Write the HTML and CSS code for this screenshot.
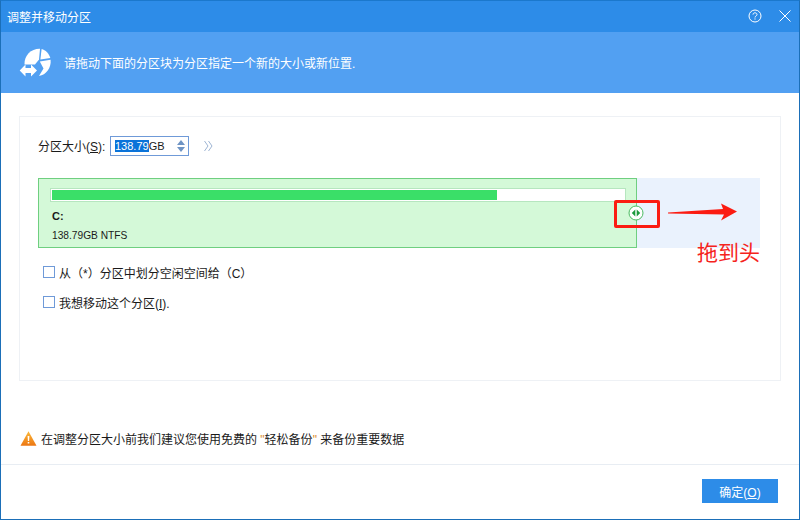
FILE: index.html
```html
<!DOCTYPE html>
<html lang="zh-CN">
  <head>
    <meta charset="UTF-8" />
    <title>调整并移动分区</title>
    <link rel="stylesheet" href="styles.css">
  </head>
  <body>
    <div class="window">
      <div class="title-bar">
        <span class="title-text">调整并移动分区</span>
        <div class="title-btns">
          <svg width="14" height="14" viewBox="0 0 14 14" fill="none" stroke="#fff">
            <circle cx="7" cy="7" r="6" />
            <path d="M5 5.6C5 4.4 5.9 3.8 7 3.8s2 .7 2 1.7c0 1.500-2 1.500-2 3" />
            <path d="M7 9.400v1.200" />
          </svg>
          <svg width="12" height="12" viewBox="0 0 12 12" fill="none" stroke="#fff">
            <path d="M.5.5l11 11M11.500.5l-11 11" />
          </svg>
        </div>
      </div>

      <div class="banner">
        <svg class="banner-icon" width="40" height="40" viewBox="0 0 40 40" fill="#fff">
          <path d="M25 5.800C16.500 5.500 9.200 12 9.500 21.500H20L24 16.500z" />
          <path d="M26.600 5.900C30.500 6.800 34.200 10.500 35.300 15L25.400 16.500z" />
          <path d="M35.600 16.800C36.500 25 31 32 24 33L28.500 25.500 24.800 18.500z" />
          <path d="M4.700 27.500L10.500 21.500V25H16V21.500L22 27.500 16 33.500V30H10.500V33.500z" />
        </svg>
        <span>请拖动下面的分区块为分区指定一个新的大小或新位置.</span>
      </div>

      <div class="content">
        <div class="panel">
          <div class="size-row">
            <span class="size-label">分区大小(<u>S</u>):</span>
            <div class="size-input">
              <span class="selected">138.79</span><span>GB</span>
              <svg class="spin" width="8" height="12" viewBox="0 0 8 12" fill="#6f94c4">
                <path d="M4 0l4 5H0zM4 12L0 7h8z" />
              </svg>
            </div>
            <svg class="more" width="9" height="12" viewBox="0 0 9 12" fill="none" stroke="#9db4d3">
              <path d="M.5 1l3.500 5-3.500 5M4.500 1l3.500 5-3.500 5" />
            </svg>
          </div>

          <div class="disk">
            <div class="partition">
              <div class="usage"><div class="usage-fill"></div></div>
              <div class="drive">C:</div>
              <div class="drive-info">138.79GB NTFS</div>
            </div>
            <div class="free"></div>
            <div class="handle">
              <svg width="16" height="16" viewBox="0 0 16 16">
                <circle cx="8" cy="8" r="7" fill="#fff" stroke="#4cbb62" />
                <path fill="#1c9a3c" d="M7.300 4.500v7L3.800 8zM8.700 4.500v7L12.200 8z" />
              </svg>
            </div>
            <div class="red-box"></div>
            <svg class="arrow" width="72" height="20" viewBox="0 0 72 20">
              <path fill="#fb1c12" d="M1 10.500L56 7 54 1.500 70 9.500 54 18.500 57 12.500 1 11.500z" />
            </svg>
            <span class="note">拖到头</span>
          </div>

          <label class="check-row first"><span class="box"></span>从（*）分区中划分空闲空间给（C）</label>
          <label class="check-row"><span class="box"></span><span>我想移动这个分区(<u>I</u>).</span></label>
        </div>

        <div class="warning">
          <svg width="17" height="15" viewBox="0 0 17 15">
            <defs>
              <linearGradient id="warnFill" x1="0" y1="0" x2="0" y2="1">
                <stop offset="0" stop-color="#fbb93a" />
                <stop offset="1" stop-color="#ec7612" />
              </linearGradient>
            </defs>
            <path fill="url(#warnFill)" d="M8.500.2L16.500 14.800H.5z" />
            <path fill="#fff" d="M7.600 5h1.800l-.3 5H7.900zM7.700 11h1.600v1.500H7.700z" />
          </svg>
          <span>在调整分区大小前我们建议您使用免费的 <b>"</b>轻松备份<b>"</b> 来备份重要数据</span>
        </div>
      </div>

      <div class="footer">
        <button class="ok-btn">确定(<u>O</u>)</button>
      </div>
    </div>
  </body>
</html>
```

FILE: styles.css
```css
* {
  box-sizing: border-box;
}

html,
body {
  margin: 0;
  padding: 0;
  width: 800px;
  height: 520px;
  overflow: hidden;
  background: #fff;
  font-family: "Liberation Sans", "Noto Sans CJK SC", sans-serif;
  font-size: 12px;
  color: #1a1a1a;
}

.window {
  width: 800px;
  height: 520px;
  display: flex;
  flex-direction: column;
  border: 1px solid #1b6fb8;
  border-top-color: #1b78cc;
}

.title-bar {
  height: 31px;
  flex: none;
  display: flex;
  align-items: center;
  justify-content: space-between;
  padding: 0 8px 0 6px;
  background: #2d8ce8;
  color: #fff;
}

.title-btns {
  display: flex;
  align-items: center;
  gap: 17px;
  margin-bottom: 2px;
}

.banner {
  height: 61px;
  flex: none;
  display: flex;
  align-items: center;
  gap: 9px;
  padding-left: 14px;
  background: #52a0f2;
  color: #fff;
}

.content {
  flex: 1;
  padding: 23px 18px 0;
}

.panel {
  position: relative;
  height: 265px;
  padding: 0 18px;
  border: 1px solid #eef1f5;
}

.size-row {
  height: 61px;
  display: flex;
  align-items: center;
  padding-bottom: 4px;
}

.size-label {
  width: 72px;
}

.size-input {
  width: 79px;
  height: 20px;
  display: flex;
  align-items: center;
  position: relative;
  padding-left: 4px;
  border: 1px solid #6f9ad8;
  font-size: 11px;
}

.selected {
  background: #0a73d9;
  color: #fff;
}

.spin {
  position: absolute;
  right: 3px;
  top: 3px;
}

.more {
  margin-left: 15px;
}

.disk {
  position: relative;
  height: 70px;
  display: flex;
  background: #eaf2fd;
  width: 722px;
}

.partition {
  width: 599px;
  padding: 9px 11px 0;
  border: 1px solid #6fcf80;
  background: #d4f9d8;
}

.usage {
  width: 576px;
  height: 14px;
  padding: 1px;
  border: 1px solid #b6e6bf;
  background: #fff;
}

.usage-fill {
  width: 445px;
  height: 10px;
  background: #3adf68;
}

.drive {
  margin: 8px 0 0 2px;
  font-size: 11px;
  font-weight: bold;
}

.drive-info {
  margin: 8px 0 0 2px;
  font-size: 10.200px;
}

.handle {
  position: absolute;
  left: 590px;
  top: 27px;
  height: 16px;
}

.red-box {
  position: absolute;
  left: 576px;
  top: 22px;
  width: 46px;
  height: 28px;
  border: 3px solid #fb1c12;
  border-radius: 2px;
}

.arrow {
  position: absolute;
  left: 629px;
  top: 24px;
}

.note {
  position: absolute;
  left: 659px;
  top: 62px;
  color: #f5231c;
  font-size: 21px;
  line-height: 26px;
}

.check-row {
  display: flex;
  align-items: center;
  gap: 4px;
  height: 18px;
  margin-top: 12px;
  padding-left: 5px;
}

.check-row.first {
  margin-top: 15px;
}

.box {
  width: 12px;
  height: 12px;
  border: 1px solid #6f9ad8;
}

.warning {
  display: flex;
  align-items: center;
  gap: 4px;
  margin-top: 49px;
  padding-left: 1px;
}

.warning b {
  font-weight: normal;
  color: #d98a2b;
}

.footer {
  height: 55px;
  flex: none;
  display: flex;
  justify-content: flex-end;
  padding: 14px 21px 0 0;
  border-top: 1px solid #e8edf3;
}

.ok-btn {
  width: 76px;
  height: 24px;
  padding: 0;
  border: none;
  background: #2d8ce8;
  color: #fff;
  font-family: inherit;
  font-size: 12px;
}
```
